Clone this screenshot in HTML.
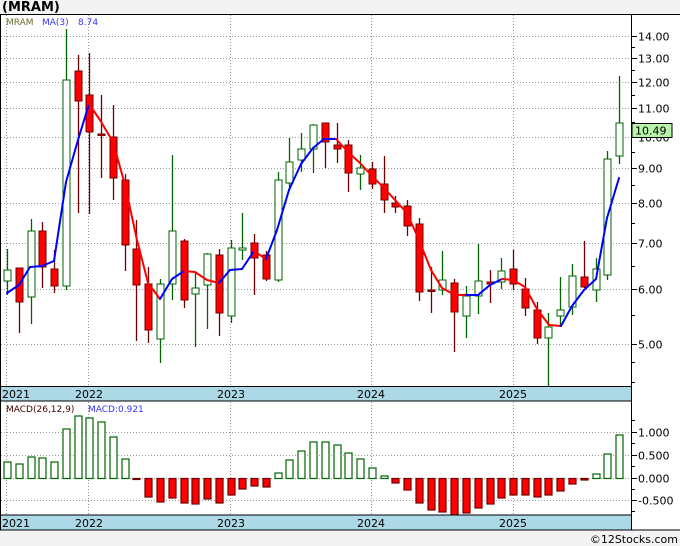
<!DOCTYPE html>
<html><head><meta charset="utf-8"><style>
html,body{margin:0;padding:0;background:#f3f3f3;width:680px;height:546px;overflow:hidden}
svg{display:block;font-family:"DejaVu Sans","Liberation Sans",sans-serif}
</style></head><body>
<svg id="s" width="680" height="546" xmlns="http://www.w3.org/2000/svg">
<rect x="0" y="0" width="680" height="546" fill="#f3f3f3"/>
<rect x="0" y="14" width="680" height="516" fill="#fff"/>
<text x="2" y="11" font-size="13" font-weight="bold" fill="#000">(MRAM)</text>
<g id="grid" stroke="#999" stroke-width="1" stroke-dasharray="1,2"></g>
<g id="c"></g>
<rect x="0" y="387" width="631" height="14" fill="#add8e6"/>
<rect x="0" y="515" width="631" height="15" fill="#add8e6"/>
<line x1="0" y1="386.5" x2="631" y2="386.5" stroke="#000"/>
<line x1="0" y1="401" x2="631" y2="401" stroke="#000"/>
<line x1="0" y1="515" x2="631" y2="515" stroke="#000"/>
<line x1="0" y1="530" x2="680" y2="530" stroke="#000"/>
<line x1="0" y1="14.5" x2="680" y2="14.5" stroke="#000"/>
<line x1="0.5" y1="14" x2="0.5" y2="530" stroke="#000"/>
<line x1="631.5" y1="14" x2="631.5" y2="530" stroke="#000"/>
<g font-size="11" fill="#000">
<text x="2" y="398">2021</text><text x="75" y="398">2022</text><text x="217" y="398">2023</text><text x="357" y="398">2024</text><text x="499" y="398">2025</text>
<text x="2" y="527">2021</text><text x="75" y="527">2022</text><text x="217" y="527">2023</text><text x="357" y="527">2024</text><text x="499" y="527">2025</text>
</g>
<g font-size="9">
<text x="6" y="25" fill="#6b6b2f">MRAM</text><text x="42" y="25" fill="#3333ff">MA(3)</text><text x="78" y="25" fill="#3333ff">8.74</text>
<text x="6" y="412" fill="#400000">MACD(26,12,9)</text><text x="88" y="412" fill="#3333ff">MACD:0.921</text>
</g>
<g id="ax" font-size="11" fill="#000"></g>
<rect x="632" y="123.5" width="40" height="14" fill="#b8f5a8" stroke="#000"/>
<text x="635" y="134.5" font-size="11" fill="#000">10.49</text>
<text x="678" y="543" font-size="11" fill="#000" text-anchor="end">©12Stocks.com</text>
</svg>
<script>
var NS="http://www.w3.org/2000/svg";
function el(p,t,a){var e=document.createElementNS(NS,t);for(var k in a)e.setAttribute(k,a[k]);p.appendChild(e);return e;}
var g=document.getElementById('grid'),c=document.getElementById('c'),ax=document.getElementById('ax');
function py(p){return 825.2-299*Math.log(p);}
[6,88,230,371,513].forEach(function(x){el(g,'line',{x1:x+.5,y1:15,x2:x+.5,y2:386,});el(g,'line',{x1:x+.5,y1:402,x2:x+.5,y2:515});});
[14,13,12,11,10,9,8,7,6,5].forEach(function(p){var y=Math.round(py(p))+.5;el(g,'line',{x1:1,y1:y,x2:631,y2:y});
 el(ax,'line',{x1:631,y1:y,x2:637,y2:y,stroke:'#000'});var t=el(ax,'text',{x:638,y:y+4});t.textContent=p.toFixed(2);});
[13.5,12.5,11.5,10.5,9.5,8.5,7.5,6.5,5.5,4.7,4.4].forEach(function(p){var y=Math.round(py(p))+.5;el(ax,'line',{x1:631,y1:y,x2:635,y2:y,stroke:'#000'});});
[[432,'1.000'],[455,'0.500'],[478,'0.000'],[500,'-0.500']].forEach(function(a){var y=a[0]+.5;el(g,'line',{x1:1,y1:y,x2:631,y2:y});el(ax,'line',{x1:631,y1:y,x2:637,y2:y,stroke:'#000'});var t=el(ax,'text',{x:638,y:y+4});t.textContent=a[1];});
[420,443,466,489,511].forEach(function(y){el(ax,'line',{x1:631,y1:y+.5,x2:635,y2:y+.5,stroke:'#000'});});
// candles: [top,bottom,high,low,color]
var C=[[270,281,249,295,'g'],[268,302,268,333,'r'],[231,297,219,324,'g'],[231,267,222,288,'r'],[269,286,250,293,'r'],
[80,286,29,290,'g'],[71,101,55,213,'r'],[95,132,53,214,'r'],[134,135,95,178,'r'],[137,178,105,200,'r'],
[180,245,174,271,'r'],[249,285,220,341,'r'],[284,330,267,343,'r'],[284,339,279,363,'g'],[231,284,155,300,'g'],
[241,300,239,308,'r'],[288,294,273,347,'g'],[254,285,253,329,'g'],[255,313,249,336,'r'],[248,316,240,323,'g'],
[248,250,213,260,'g'],[243,258,234,295,'r'],[255,279,251,281,'r'],[180,280,172,282,'g'],[162,183,138,190,'g'],
[149,160,133,172,'g'],[125,149,124,173,'g'],[123,142,123,168,'r'],[145,149,123,163,'r'],[145,173,140,192,'r'],
[168,174,155,190,'g'],[169,184,162,189,'r'],[184,200,156,213,'r'],[203,207,196,213,'r'],[206,226,200,236,'r'],
[224,292,218,301,'r'],[290,291,267,313,'r'],[280,290,251,295,'g'],[283,312,279,352,'r'],[296,316,286,338,'g'],
[281,296,244,314,'g'],[282,284,270,303,'r'],[271,282,258,289,'g'],[269,284,250,290,'r'],[289,308,278,316,'r'],
[310,338,302,344,'r'],[327,338,313,387,'g'],[310,316,277,325,'g'],[276,307,264,315,'g'],[277,287,241,288,'r'],
[269,290,258,302,'g'],[159,275,151,280,'g'],[123,156,76,164,'g']];
var M=[462,464,457,458,462,429,416,418,422,437,459,479,497,502,498,503,504,499,503,495,489,486,487,473,460,451,442,442,445,453,459,468,476,483,490,503,510,512,515,513,508,504,498,495,495,497,495,491,484,480,474,454,435];
function X(i){return Math.round(7+i*11.77);}
C.forEach(function(d,i){var x=X(i)+.5,gr=d[4]=='g';var sc=gr?'#006400':'#700000';
 el(c,'line',{x1:x,y1:d[2],x2:x,y2:d[3],stroke:sc,'stroke-width':1.3});
 var h=Math.max(1.5,d[1]-d[0]);el(c,'rect',{x:x-3.5,y:d[0],width:7,height:h,fill:gr?'#fff':'#ff0000',stroke:sc,'stroke-width':1});
 var m=M[i],pos=m<478;el(c,'rect',{x:x-3.5,y:pos?m:478.5,width:7,height:Math.max(1,Math.abs(478.5-m)),fill:pos?'#fff':'#ff0000',stroke:pos?'#006400':'#700000','stroke-width':1.2});
});
var MA=[[7,293,'b'],[19,285,'b'],[30,267,'b'],[42,266,'b'],[54,261,'b'],[66,182,'b'],[78,140,'b'],[89,104,'b'],[100,120,'r'],[113,142,'r'],[125,185,'r'],[137,240,'r'],[148,283,'r'],[160,299,'r'],[172,279,'b'],[184,271,'b'],[195,272,'r'],[207,280,'r'],[219,283,'r'],[230,270,'b'],[242,269,'b'],[254,251,'b'],[266,259,'r'],[277,230,'b'],[289,190,'b'],[301,164,'b'],[313,148,'b'],[324,139,'b'],[336,139,'b'],[348,152,'r'],[360,163,'r'],[372,176,'r'],[384,188,'r'],[395,200,'r'],[407,213,'r'],[419,240,'r'],[431,270,'r'],[442,288,'r'],[455,295,'r'],[466,295,'r'],[478,295,'b'],[490,285,'b'],[502,279,'b'],[513,280,'r'],[525,287,'r'],[537,309,'r'],[549,325,'r'],[561,326,'r'],[572,306,'b'],[584,290,'b'],[596,279,'b'],[607,218,'b'],[619,178,'b']];
for(var i=1;i<MA.length;i++){el(c,'line',{x1:MA[i-1][0],y1:MA[i-1][1],x2:MA[i][0],y2:MA[i][1],stroke:MA[i][2]=='b'?'#0000ff':'#ff0000','stroke-width':2,'stroke-linecap':'round'});}
</script>
</body></html>
